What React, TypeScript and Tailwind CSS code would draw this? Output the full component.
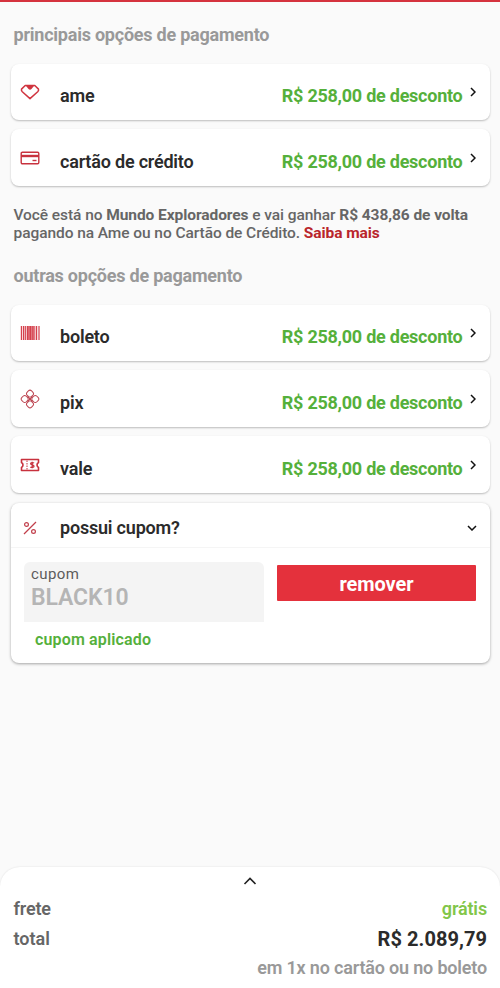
import { ReactNode, useState } from "react"

interface PaymentOption {
    name: string
    discount: string
    icon: ReactNode
}

const AmeIcon = () => (
    <svg width="20" height="16" viewBox="0 0 20 16" fill="none" stroke="#d0343f" strokeWidth="1.5" strokeLinejoin="round">
        <path d="M5.2 1.5h9.6l3.7 3.6c.3 1-.1 1.900-.8 2.600L10 14.600 2.300 7.700C1.600 7 1.200 6.100 1.500 5.100z" />
        <path d="M5.500 1.200h9l-3 3.900Q10 6.400 8.500 5.100z" fill="#d0343f" stroke="none" />
    </svg>
)

const CardIcon = () => (
    <svg width="20" height="14" viewBox="0 0 20 14" fill="none" stroke="#c8323e" strokeWidth="1.4">
        <rect x="1.2" y="1.2" width="17.6" height="11.6" rx="1.2" />
        <path d="M1 5h18" strokeWidth="2.4" />
        <path d="M12.5 9.5h4" />
    </svg>
)

const BarcodeIcon = () => (
    <svg width="20" height="14" viewBox="0 0 20 14" fill="#d5404c">
        <rect x="0.8" width="1.2" height="14" />
        <rect x="2.8" width="1.6" height="14" />
        <rect x="5.1" width="0.9" height="14" />
        <rect x="6.7" width="2.1" height="14" />
        <rect x="9.2" width="2.5" height="14" />
        <rect x="12.1" width="1.7" height="14" />
        <rect x="14.3" width="1" height="14" />
        <rect x="16" width="1.2" height="14" />
        <rect x="18.4" width="1.2" height="14" />
    </svg>
)

const PixIcon = () => (
    <svg width="20" height="20" viewBox="0 0 20 20" fill="none" stroke="#bd4652" strokeWidth="1">
        <rect x="-3.1" y="-3.1" width="6.2" height="6.2" rx="2.3" transform="translate(10 4.7) rotate(45)" />
        <rect x="-3.1" y="-3.1" width="6.2" height="6.2" rx="2.3" transform="translate(4.7 10) rotate(45)" />
        <rect x="-3.1" y="-3.1" width="6.2" height="6.2" rx="2.3" transform="translate(15.3 10) rotate(45)" />
        <rect x="-3.1" y="-3.1" width="6.2" height="6.2" rx="2.3" transform="translate(10 15.3) rotate(45)" />
        <path d="M7.500 7.500l5 5M12.500 7.500l-5 5" />
    </svg>
)

const TicketIcon = () => (
    <svg width="20" height="14" viewBox="0 0 20 14" fill="none" stroke="#c8323e" strokeWidth="1.6">
        <path d="M1.500 1.500h17v3c-2 1.200-2 3.800 0 5v3h-17v-3c2-1.200 2-3.800 0-5z" strokeLinejoin="round" />
        <path d="M7 2.500v9" strokeWidth="1" strokeDasharray="1.5 1" />
        <path d="M14 5.100c-.7-.7-3.400-.8-3.400.6 0 1.600 3.400.9 3.400 2.600 0 1.500-2.700 1.400-3.600.6M12.200 3.700v6.600" strokeWidth="1.3" />
    </svg>
)

const PercentIcon = () => (
    <svg width="14" height="14" viewBox="0 0 14 14" fill="none" stroke="#c13f4b" strokeWidth="1.2">
        <path d="M1 13L13 1" />
        <circle cx="3.5" cy="3.5" r="1.9" />
        <circle cx="10.5" cy="10.5" r="1.9" />
    </svg>
)

const mainOptions: PaymentOption[] = [
    { name: "ame", discount: "R$ 258,00 de desconto", icon: <AmeIcon /> },
    { name: "cartão de crédito", discount: "R$ 258,00 de desconto", icon: <CardIcon /> },
]

const otherOptions: PaymentOption[] = [
    { name: "boleto", discount: "R$ 258,00 de desconto", icon: <BarcodeIcon /> },
    { name: "pix", discount: "R$ 258,00 de desconto", icon: <PixIcon /> },
    { name: "vale", discount: "R$ 258,00 de desconto", icon: <TicketIcon /> },
]

const OptionCard = ({ option }: { option: PaymentOption }) => {
    return (
        <button className="flex h-[56.6px] w-full items-center rounded-lg bg-white pl-[9.5px] pr-[14px] text-left shadow-[0_1px_2px_rgba(0,0,0,0.25)]">
            <span className="mt-[0.4px] flex w-5 justify-center">{option.icon}</span>
            <span className="ml-5 mt-[8.2px] flex-1 text-[18px] font-semibold leading-6 tracking-[-0.2px] text-[#2b2b2b]">{option.name}</span>
            <span className="mt-[8.2px] text-[18px] font-bold leading-6 tracking-[-0.25px] text-[#55b03b]">{option.discount}</span>
            <svg className="ml-[7px] mt-[0.4px]" width="6" height="10" viewBox="0 0 6 10" fill="none" stroke="#111" strokeWidth="1.5">
                <path d="M1 1l4 4-4 4" />
            </svg>
        </button>
    )
}

const App = () => {
    const [coupon, setCoupon] = useState("BLACK10")

    return (
        <div className="flex h-[988px] w-[500px] flex-col overflow-hidden border-t-2 border-[#d5333e] bg-[#fafafa] font-[Roboto,sans-serif]">
            <main className="flex-1 px-[10.5px] pt-[21px]">
                <h2 className="pl-[3px] text-[18px] font-bold leading-6 tracking-[-0.23px] text-[#999]">principais opções de pagamento</h2>
                <div className="mt-[16.6px] flex flex-col gap-[9.2px]">
                    {mainOptions.map((option) => <OptionCard key={option.name} option={option} />)}
                </div>

                <p className="mt-[20.4px] whitespace-nowrap pl-[3px] text-[15.5px] font-medium leading-[18px] tracking-[-0.07px] text-[#666]">
                    Você está no <b>Mundo Exploradores</b> e vai ganhar <b>R$ 438,86 de volta</b>
                    <br />
                    pagando na Ame ou no Cartão de Crédito. <a className="font-bold text-[#b9252b]">Saiba mais</a>
                </p>

                <h2 className="mt-[22px] pl-[3px] text-[18px] font-bold leading-6 tracking-[-0.23px] text-[#999]">outras opções de pagamento</h2>
                <div className="mt-[16.3px] flex flex-col gap-[9.2px]">
                    {otherOptions.map((option) => <OptionCard key={option.name} option={option} />)}

                    <section className="mt-[0.6px] h-[160px] rounded-lg bg-white shadow-[0_1px_3px_rgba(0,0,0,0.35)]">
                        <div className="flex h-[45px] items-center border-b border-[#f5f5f5] pl-[12.5px] pr-[13px] pt-[7px]">
                            <PercentIcon />
                            <span className="ml-[23px] mt-[0.6px] flex-1 text-[18px] font-semibold leading-6 tracking-[-0.2px] text-[#2b2b2b]">possui cupom?</span>
                            <svg width="10" height="6" viewBox="0 0 10 6" fill="none" stroke="#111" strokeWidth="1.5">
                                <path d="M1 1l4 4 4-4" />
                            </svg>
                        </div>
                        <div className="flex items-start pl-[13.5px] pr-[13.5px] pt-[14.4px]">
                            <div className="h-[60px] w-[240px] rounded-t-md bg-[#f4f4f4] px-[7px] pt-[3px]">
                                <div className="text-[15px] leading-[18px] tracking-[0.4px] text-[#5c5c5c]">cupom</div>
                                <div className="mt-[1px] text-[23px] font-semibold leading-[28px] tracking-[-0.1px] text-[#b5b5b5]">{coupon}</div>
                            </div>
                            <button className="ml-[13px] mt-[3px] h-9 flex-1 rounded-[1px] bg-[#e4313c] pt-[2px] text-[20px] font-bold tracking-[-0.05px] text-white" onClick={() => setCoupon("")}>remover</button>
                        </div>
                        <p className="mt-2 pl-[24.5px] text-[16px] font-semibold leading-5 tracking-[0.15px] text-[#55b03b]">cupom aplicado</p>
                    </section>
                </div>
            </main>

            <footer className="h-[121px] rounded-t-[20px] bg-white px-[13px] shadow-[0_0_2px_rgba(0,0,0,0.12)]">
                <svg className="mx-auto mt-[10px]" width="14" height="8" viewBox="0 0 14 8" fill="none" stroke="#222" strokeWidth="1.6">
                    <path d="M1.5 7L7 1.5 12.5 7" />
                </svg>
                <div className="mt-[12px] flex justify-between text-[18px] font-semibold leading-6 tracking-[-0.15px]">
                    <span className="pl-[0.5px] text-[#666]">frete</span>
                    <span className="text-[#82c649]">grátis</span>
                </div>
                <div className="mt-[6px] flex justify-between leading-6">
                    <span className="pl-[0.5px] text-[18px] font-semibold text-[#666]">total</span>
                    <span className="text-[20px] font-bold tracking-[0.05px] text-[#2b2b2b]">R$ 2.089,79</span>
                </div>
                <p className="mt-[5px] text-right text-[18px] font-semibold leading-6 tracking-[-0.18px] text-[#999]">em 1x no cartão ou no boleto</p>
            </footer>
        </div>
    )
}

export default App
